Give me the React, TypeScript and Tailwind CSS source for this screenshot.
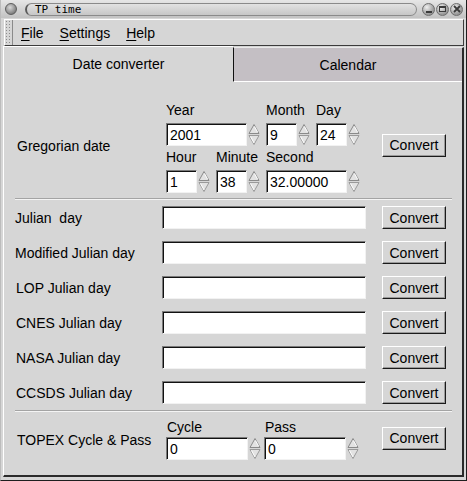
import React from "react";

function Spin({ className = "" }: { className?: string }) {
  return (
    <svg width="12" height="23" viewBox="0 0 12 23" className={`shrink-0 ${className}`}>
      <polygon points="6,1.5 11,10.5 1,10.5" fill="#e2e2e2" />
      <polyline points="6,1.5 11,10.5 1,10.5 6,1.5" stroke="#8a8a8a" strokeWidth="1" fill="none" />
      <polyline points="6.5,3.5 9.5,9" stroke="#ffffff" strokeWidth="1" fill="none" />
      <polygon points="1,12.5 11,12.5 6,21.5" fill="#e2e2e2" />
      <polyline points="1,12.5 11,12.5 6,21.5 1,12.5" stroke="#9a9a9a" strokeWidth="1" fill="none" />
      <polyline points="2.5,13.5 6,20" stroke="#ffffff" strokeWidth="1" fill="none" />
    </svg>
  );
}

function Input({ className, value }: { className: string; value?: string }) {
  return (
    <div
      className={`h-[23px] bg-white border border-t-[#7a7a7a] border-l-[#7a7a7a] border-b-[#f2f2f2] border-r-[#f2f2f2] shadow-[inset_1px_1px_0_#111] pl-[3px] flex items-center text-[14px] leading-none text-black ${className}`}
    >
      {value}
    </div>
  );
}

function Btn({ className = "" }: { className?: string }) {
  return (
    <div
      className={`w-[64px] h-[23px] shrink-0 flex items-center justify-center border border-t-white border-l-white border-b-[#1a1a1a] border-r-[#1a1a1a] shadow-[inset_-1px_-1px_0_#9a9a9a] text-[14px] leading-none text-black ${className}`}
    >
      Convert
    </div>
  );
}

function Row({ label, labelClass = "" }: { label: string; labelClass?: string }) {
  return (
    <div className="flex items-center h-[23px]">
      <div className={`w-[147px] whitespace-pre text-[14px] leading-none ${labelClass}`}>{label}</div>
      <Input className="w-[204px]" />
      <Btn className="ml-[16px]" />
    </div>
  );
}

function Sep() {
  return <div className="ml-[11px] w-[437px] h-[2px] border-t border-t-[#a4a4a4] border-b border-b-[#f4f4f4]" />;
}

function Label({ children, className = "" }: { children: React.ReactNode; className?: string }) {
  return <div className={`h-[16px] text-[14px] leading-[16px] whitespace-nowrap ${className}`}>{children}</div>;
}

function TitleBall({ glyph }: { glyph?: "min" | "max" | "close" }) {
  return (
    <div className="w-[13px] h-[13px] rounded-full border border-[#6e6e6e] bg-[radial-gradient(circle_at_35%_30%,#f0f0f0,#a8a8a8_55%,#7a7a7a)] flex items-center justify-center">
      {glyph === "min" && <div className="w-[6px] h-[2px] bg-[#3a3a3a] mt-[5px]" />}
      {glyph === "max" && <div className="w-[7px] h-[6px] border border-[#3a3a3a] border-t-2" />}
      {glyph === "close" && (
        <svg width="8" height="8" viewBox="0 0 8 8">
          <path d="M1 1 L7 7 M7 1 L1 7" stroke="#3a3a3a" strokeWidth="1.8" />
        </svg>
      )}
    </div>
  );
}

export default function App() {
  return (
    <div className="w-[467px] h-[481px] bg-[#d6d6d6] font-['Liberation_Sans',Arial,sans-serif] text-black flex flex-col overflow-hidden border-r border-b border-r-[#1e1e1e] border-b-[#1e1e1e] border-l border-l-[#bcbcbc]">
      {/* Title bar */}
      <div className="h-[18px] shrink-0 flex items-center bg-linear-to-b from-[#e6e6e6] to-[#c2c2c2]">
        <div className="ml-[4px] w-[12px] h-[12px] rounded-full border border-[#5e5e5e] bg-[radial-gradient(circle_at_40%_35%,#d8d8d8,#8e8e8e_60%,#5e5e5e)]" />
        <div className="ml-[8px] w-[392px] h-[13px] rounded-full border border-[#8a8a8a] border-l-2 border-l-[#5a5a5a] bg-linear-to-b from-[#e2e2e2] to-[#c6c6c6] flex items-center pl-[8px]">
          <span className="font-['DejaVu_Sans_Mono',monospace] text-[11px] leading-none text-black">TP time</span>
        </div>
        <div className="ml-[5px] flex gap-[1px]">
          <TitleBall glyph="min" />
          <TitleBall glyph="max" />
          <TitleBall glyph="close" />
        </div>
      </div>

      {/* Menu bar */}
      <div className="mt-[1px] ml-[3px] w-[460px] h-[27px] shrink-0 flex border border-t-white border-l-white border-b-[#3c3c3c] border-r-[#3c3c3c]">
        <div className="w-[8px] h-full border-r border-r-[#8a8a8a] bg-[radial-gradient(#8c8c8c_0.8px,transparent_1px)] bg-size-[3px_3px]" />
        <div className="flex items-center text-[14px] leading-none">
          <span className="px-[8px]"><span className="underline underline-offset-2">F</span>ile</span>
          <span className="px-[8px]"><span className="underline underline-offset-2">S</span>ettings</span>
          <span className="px-[8px]"><span className="underline underline-offset-2">H</span>elp</span>
        </div>
      </div>

      {/* Tabs */}
      <div className="h-[35px] shrink-0 flex ml-[2px]">
        <div className="w-[230px] h-full border-t border-l border-t-white border-l-white flex items-center justify-center text-[14px] leading-none">
          Date converter
        </div>
        <div className="w-[231px] h-full mt-[1px] bg-[#c4bfc4] border-l border-l-[#101010] border-t border-t-[#eaeaea] border-r-2 border-r-[#2a2a2a] border-b border-b-white flex items-center justify-center text-[14px] leading-none">
          Calendar
        </div>
      </div>

      {/* Panel */}
      <div className="ml-[2px] w-[461px] h-[396px] shrink-0 border-l border-l-white border-r-2 border-r-[#2a2a2a] border-b-2 border-b-[#2a2a2a] flex flex-col">
        {/* Gregorian */}
        <div className="mt-[21px] ml-[11px] flex items-center">
          <div className="w-[151px] pl-[2px] mb-[3px] text-[14px] leading-none">Gregorian date</div>
          <div className="w-[216px] flex flex-col">
            <div className="flex gap-[6px]">
              <div className="flex flex-col">
                <Label>Year</Label>
                <div className="mt-[5px] flex"><Input className="w-[81px]" value="2001" /><Spin className="ml-[1px]" /></div>
              </div>
              <div className="flex flex-col">
                <Label>Month</Label>
                <div className="mt-[5px] flex"><Input className="w-[31px]" value="9" /><Spin className="ml-[1px]" /></div>
              </div>
              <div className="flex flex-col">
                <Label>Day</Label>
                <div className="mt-[5px] flex"><Input className="w-[31px]" value="24" /><Spin className="ml-[1px]" /></div>
              </div>
            </div>
            <div className="mt-[3px] flex gap-[6px]">
              <div className="flex flex-col">
                <Label>Hour</Label>
                <div className="mt-[5px] flex"><Input className="w-[31px]" value="1" /><Spin className="ml-[1px]" /></div>
              </div>
              <div className="flex flex-col">
                <Label>Minute</Label>
                <div className="mt-[5px] flex"><Input className="w-[31px]" value="38" /><Spin className="ml-[1px]" /></div>
              </div>
              <div className="flex flex-col">
                <Label>Second</Label>
                <div className="mt-[5px] flex"><Input className="w-[81px]" value="32.00000" /><Spin className="ml-[1px]" /></div>
              </div>
            </div>
          </div>
          <Btn className="mb-[5px]" />
        </div>

        <div className="mt-[5px]"><Sep /></div>

        <div className="mt-[6px] ml-[11px] flex flex-col gap-[12px]">
          <Row label="Julian  day" />
          <Row label="Modified Julian day" />
          <Row label="LOP Julian day" labelClass="pl-[1px]" />
          <Row label="CNES Julian day" labelClass="pl-[1px]" />
          <Row label="NASA Julian day" labelClass="pl-[1px]" />
          <Row label="CCSDS Julian day" labelClass="pl-[1px]" />
        </div>

        <div className="mt-[6px]"><Sep /></div>

        {/* TOPEX */}
        <div className="mt-[7px] ml-[11px] flex items-center">
          <div className="w-[151px] pl-[2px] text-[14px] leading-none">TOPEX Cycle &amp; Pass</div>
          <div className="w-[216px] flex">
            <div className="flex flex-col">
              <Label className="pl-[1px]">Cycle</Label>
              <div className="mt-[2px] flex"><Input className="w-[82px]" value="0" /><Spin className="ml-[1px]" /></div>
            </div>
            <div className="ml-[3px] flex flex-col">
              <Label className="pl-[1px]">Pass</Label>
              <div className="mt-[2px] flex"><Input className="w-[82px]" value="0" /><Spin className="ml-[1px]" /></div>
            </div>
          </div>
          <Btn className="mb-[3px]" />
        </div>
      </div>
    </div>
  );
}
